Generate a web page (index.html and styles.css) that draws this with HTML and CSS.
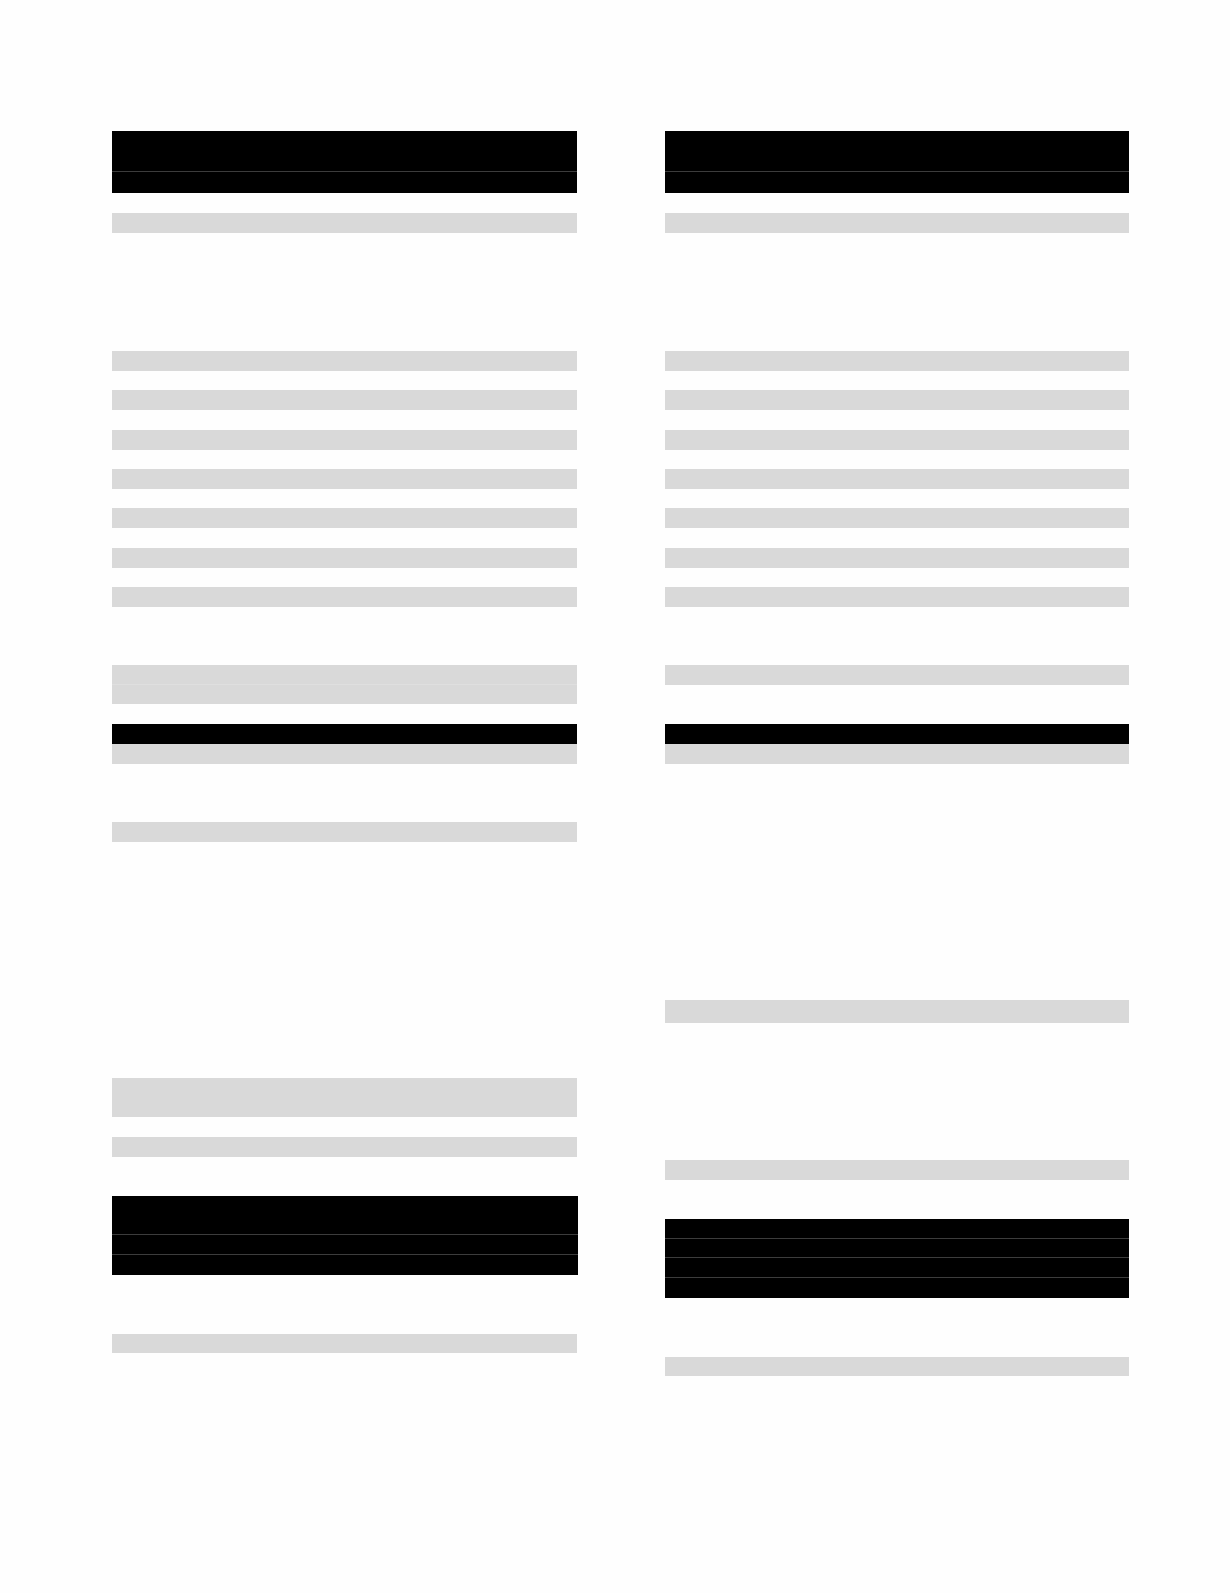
FILE: index.html
```html
<!DOCTYPE html>
<html lang="en">
<head>
<meta charset="utf-8">
<title>Document</title>
<link rel="stylesheet" href="styles.css">
</head>
<body>
<main class="page">
  <section class="col">
    <div class="tbl">
      <div class="row row-40"></div>
      <div class="row row-21"></div>
    </div>
    <div class="bar mt-20"></div>
    <div class="list mt-118">
      <div class="bar"></div>
      <div class="bar"></div>
      <div class="bar"></div>
      <div class="bar"></div>
      <div class="bar"></div>
      <div class="bar"></div>
      <div class="bar"></div>
    </div>
    <div class="pair mt-58">
      <div class="bar split"></div>
      <div class="bar h-19"></div>
    </div>
    <div class="bar dark mt-20"></div>
    <div class="bar"></div>
    <div class="bar mt-58"></div>
    <div class="bar h-39 mt-236"></div>
    <div class="bar mt-20"></div>
    <div class="tbl wide mt-39">
      <div class="row row-39"></div>
      <div class="row row-20"></div>
      <div class="row row-20 last"></div>
    </div>
    <div class="bar h-19 mt-59"></div>
  </section>

  <section class="col">
    <div class="tbl">
      <div class="row row-40"></div>
      <div class="row row-21"></div>
    </div>
    <div class="bar mt-20"></div>
    <div class="list mt-118">
      <div class="bar"></div>
      <div class="bar"></div>
      <div class="bar"></div>
      <div class="bar"></div>
      <div class="bar"></div>
      <div class="bar"></div>
      <div class="bar"></div>
    </div>
    <div class="bar mt-58"></div>
    <div class="bar dark mt-39"></div>
    <div class="bar"></div>
    <div class="bar h-23 mt-236"></div>
    <div class="bar mt-137"></div>
    <div class="tbl mt-39">
      <div class="row row-20"></div>
      <div class="row row-19"></div>
      <div class="row row-20"></div>
      <div class="row row-20 last"></div>
    </div>
    <div class="bar h-19 mt-59"></div>
  </section>
</main>
</body>
</html>
```

FILE: styles.css
```css
html, body {
  margin: 0;
  padding: 0;
  background: #fefefe;
  font-family: "Liberation Sans", Arial, sans-serif;
}

.page {
  display: grid;
  grid-template-columns: 465px 464px;
  column-gap: 88px;
  padding: 131px 0 0 112px;
  align-items: start;
}

.col {
  display: flex;
  flex-direction: column;
}

.tbl {
  display: flex;
  flex-direction: column;
  background: #000;
}

.tbl.wide {
  width: 466px;
}

.row {
  background: #000;
  border-bottom: 1px solid #3c3c3c;
  box-sizing: border-box;
}

.row.last {
  border-bottom: none;
}

.row-40 { height: 41px; }
.row-21 { height: 21px; border-bottom: none; }
.row-39 { height: 39px; }
.row-20 { height: 20px; }
.row-19 { height: 19px; }

.bar {
  height: 20px;
  background: #d9d9d9;
}

.bar.dark {
  background: #000;
}

.bar.split {
  border-bottom: 1px solid #dfdfdf;
  box-sizing: border-box;
}

.h-19 { height: 19px; }
.h-23 { height: 23px; }
.h-39 { height: 39px; }

.list {
  display: flex;
  flex-direction: column;
  gap: 19.33px;
}

.pair {
  display: flex;
  flex-direction: column;
}

.mt-20 { margin-top: 20px; }
.mt-39 { margin-top: 39px; }
.mt-58 { margin-top: 58px; }
.mt-59 { margin-top: 59px; }
.mt-118 { margin-top: 118px; }
.mt-137 { margin-top: 137px; }
.mt-236 { margin-top: 236px; }
```
